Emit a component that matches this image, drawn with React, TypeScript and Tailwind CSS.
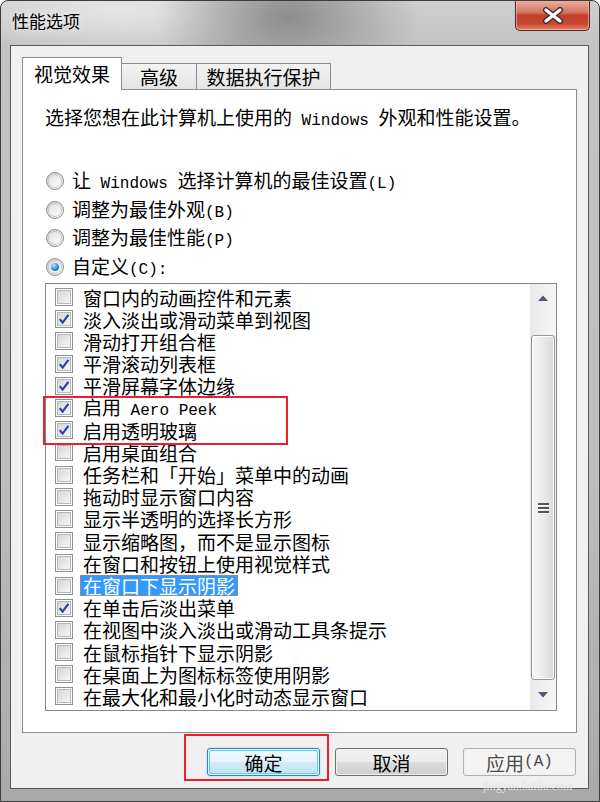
import React from "react";

const rows: [string, boolean][] = [
  ["窗口内的动画控件和元素", false],
  ["淡入淡出或滑动菜单到视图", true],
  ["滑动打开组合框", false],
  ["平滑滚动列表框", true],
  ["平滑屏幕字体边缘", true],
  ["启用 Aero Peek", true],
  ["启用透明玻璃", true],
  ["启用桌面组合", false],
  ["任务栏和「开始」菜单中的动画", false],
  ["拖动时显示窗口内容", false],
  ["显示半透明的选择长方形", false],
  ["显示缩略图，而不是显示图标", false],
  ["在窗口和按钮上使用视觉样式", false],
  ["在窗口下显示阴影", false],
  ["在单击后淡出菜单", true],
  ["在视图中淡入淡出或滑动工具条提示", false],
  ["在鼠标指针下显示阴影", false],
  ["在桌面上为图标标签使用阴影", false],
  ["在最大化和最小化时动态显示窗口", false],
];

// latin runs in the dialog font are half width, so shrink them
function Txt({ s }: { s: string }) {
  const parts = s.split(/([\x20-\x7e]+)/);
  return (
    <>
      {parts.map((p, i) =>
        /^[\x20-\x7e]+$/.test(p) ? (
          <span key={i} className="font-[family-name:'Liberation_Mono',monospace] text-[16px]">
            {p}
          </span>
        ) : (
          <React.Fragment key={i}>{p}</React.Fragment>
        )
      )}
    </>
  );
}

function Check({ on }: { on: boolean }) {
  return (
    <span className="flex w-[18px] h-[18px] shrink-0 border border-[#8e8f8f] bg-white p-px">
      <span className="flex flex-1 items-center justify-center border border-[#b5b8bc] bg-[linear-gradient(135deg,#d6d6d6,#f6f6f6)]">
        {on && (
          <svg width="12" height="12" viewBox="0 0 12 12">
            <path d="M1.8 6.2 L4.6 9.6 L10.4 1.8" fill="none" stroke="#2a3f9a" strokeWidth="2.1" />
          </svg>
        )}
      </span>
    </span>
  );
}

function Radio({ on }: { on: boolean }) {
  return (
    <span className="flex w-[18px] h-[18px] shrink-0 items-center justify-center rounded-full border border-[#8e8f8f] bg-[linear-gradient(135deg,#cfcfcf,#f8f8f8)]">
      <span className="flex w-[14px] h-[14px] items-center justify-center rounded-full border border-[#c8c8c8] bg-[linear-gradient(135deg,#e2e2e2,#fcfcfc)]">
        {on && (
          <span className="w-[8px] h-[8px] rounded-full bg-[radial-gradient(circle_at_35%_30%,#b8ecff_0%,#3aa0e6_45%,#0f4f94_100%)]" />
        )}
      </span>
    </span>
  );
}

function Btn({ label, primary, dim }: { label: string; primary?: boolean; dim?: boolean }) {
  return (
    <div
      className={
        primary
          ? "w-[113px] h-[28px] rounded-[3px] border border-[#3c7fb1] p-px shadow-[0_0_2px_#7fd0ff]"
          : dim
          ? "w-[113px] h-[28px] rounded-[3px] border border-[#adb2b5] p-px"
          : "w-[113px] h-[28px] rounded-[3px] border border-[#707070] p-px"
      }
    >
      <div
        className={
          primary
            ? "flex h-full items-center justify-center rounded-[2px] border border-[#48d6ff] bg-[linear-gradient(180deg,#f2f9fd_0%,#e6f3fa_50%,#d4ebf7_51%,#c4e3f4_100%)] text-[19px] leading-none text-black"
            : dim
            ? "flex h-full items-center justify-center rounded-[2px] bg-[#f4f4f4] text-[19px] leading-none text-[#4a4a4a]"
            : "flex h-full items-center justify-center rounded-[2px] bg-[linear-gradient(180deg,#f2f2f2_0%,#ebebeb_50%,#dddddd_51%,#cfcfcf_100%)] text-[19px] leading-none text-black"
        }
      >
        <Txt s={label} />
      </div>
    </div>
  );
}

export default function App() {
  return (
    <div className="relative flex w-[600px] h-[802px] flex-col overflow-hidden rounded-t-[8px] border border-[#3b3b3b] bg-[radial-gradient(ellipse_22%_10%_at_48%_2%,#8c8c8c_0%,rgba(140,140,140,0)_100%),radial-gradient(ellipse_30%_6%_at_20%_1%,#e6e6e6_0%,rgba(230,230,230,0)_100%),linear-gradient(180deg,#cfcfcf_0%,#c2c2c2_6%,#bdbdbd_60%,#a9a9a9_100%)] pl-[9px] pr-[10px] pb-[12px] font-[family-name:'Noto_Sans_CJK_SC',sans-serif] text-black">
      {/* title bar */}
      <div className="flex h-[44px] shrink-0 items-start justify-between">
        <div className="pl-[2px] pt-[9px] text-[17px] leading-[22px] [text-shadow:0_0_8px_#fff]">性能选项</div>
        <div className="-mt-px -mr-px flex w-[75px] h-[31px] items-center justify-center rounded-b-[5px] border border-t-0 border-[#5c2219] bg-[linear-gradient(180deg,#eab3a3_0%,#d57762_40%,#c0412a_52%,#c8472e_80%,#e0826a_100%)] shadow-[inset_0_0_0_1px_rgba(255,220,210,0.5)]">
          <svg width="22" height="17" viewBox="0 0 22 17">
            <path d="M4 3 L18 14 M18 3 L4 14" stroke="#3d2a2a" strokeWidth="6" strokeLinecap="round" />
            <path d="M4 3 L18 14 M18 3 L4 14" stroke="#ffffff" strokeWidth="3.4" strokeLinecap="round" />
          </svg>
        </div>
      </div>

      {/* client area */}
      <div className="relative flex flex-1 flex-col border border-[#5a5a5a] bg-[#f0f0f0] px-[11px] pt-[11px] pb-[11px]">
        {/* tabs */}
        <div className="relative z-10 -mb-px flex h-[33px] items-end text-[19px] leading-none">
          <div className="flex w-[100px] h-[33px] items-center justify-center border border-b-0 border-[#898c95] bg-white pb-[2px]">
            视觉效果
          </div>
          <div className="flex w-[75px] h-[27px] items-center justify-center border border-l-0 border-[#898c95] bg-[linear-gradient(180deg,#f3f3f3,#e4e4e4)]">
            高级
          </div>
          <div className="flex w-[134px] h-[27px] items-center justify-center border border-l-0 border-[#898c95] bg-[linear-gradient(180deg,#f3f3f3,#e4e4e4)]">
            数据执行保护
          </div>
        </div>

        {/* panel */}
        <div className="flex h-[644px] flex-col border border-[#898c95] bg-white pl-[22px] pr-[19px] text-[19px]">
          <div className="mt-[16px] h-[22px] leading-[22px]">
            <Txt s="选择您想在此计算机上使用的 Windows 外观和性能设置。" />
          </div>

          <div className="mt-[39px] flex flex-col">
            {[
              ["让 Windows 选择计算机的最佳设置(L)", false],
              ["调整为最佳外观(B)", false],
              ["调整为最佳性能(P)", false],
              ["自定义(C):", true],
            ].map(([t, on]) => (
              <div key={t as string} className="flex h-[28.5px] items-center gap-[8px] pl-px leading-none">
                <Radio on={on as boolean} />
                <span>
                  <Txt s={t as string} />
                </span>
              </div>
            ))}
          </div>

          {/* list */}
          <div className="mt-[2px] flex h-[428px] border border-[#828790] bg-white">
            <div className="flex flex-1 flex-col pl-[9px] pt-[2px]">
              {rows.map(([t, on], i) => (
                <div key={t} className="flex h-[22.2px] items-center gap-[7px] leading-none">
                  <Check on={on} />
                  <span
                    className={
                      i === 13
                        ? "flex h-[21px] items-center bg-[#3399ff] px-[3px] text-white outline-1 outline-dotted outline-offset-[-1px] outline-[#e08030]"
                        : "px-[3px]"
                    }
                  >
                    <Txt s={t} />
                  </span>
                </div>
              ))}
            </div>

            {/* scrollbar */}
            <div className="flex w-[26px] flex-col bg-[linear-gradient(90deg,#e9e9e9,#f6f6f6)]">
              <div className="flex h-[27px] items-center justify-center">
                <svg width="10" height="6" viewBox="0 0 10 6">
                  <path d="M0 6 L5 0.5 L10 6 Z" fill="#4a5a78" />
                </svg>
              </div>
              <div className="h-[24px]" />
              <div className="mx-[1px] flex h-[345px] items-center justify-center rounded-[3px] border border-[#979797] bg-[linear-gradient(90deg,#f7f7f7_0%,#ececec_45%,#d9d9d9_100%)] shadow-[inset_0_0_0_1px_#fff]">
                <div className="flex w-[11px] flex-col gap-[2px]">
                  <div className="h-[2px] bg-[#555] shadow-[0_1px_0_#fff]" />
                  <div className="h-[2px] bg-[#555] shadow-[0_1px_0_#fff]" />
                  <div className="h-[2px] bg-[#555] shadow-[0_1px_0_#fff]" />
                </div>
              </div>
              <div className="flex flex-1 items-center justify-center">
                <svg width="10" height="6" viewBox="0 0 10 6">
                  <path d="M0 0 L5 5.5 L10 0 Z" fill="#4a5a78" />
                </svg>
              </div>
            </div>
          </div>
        </div>

        {/* buttons */}
        <div className="mt-[15px] flex justify-end gap-[15px] pr-px">
          <Btn label="确定" primary />
          <Btn label="取消" />
          <Btn label="应用(A)" dim />
        </div>
      </div>

      {/* annotation boxes */}
      <div className="absolute left-[42px] top-[395px] w-[245px] h-[49px] border-2 border-[#e8212a]" />
      <div className="absolute left-[183px] top-[733px] w-[145px] h-[47px] border-2 border-[#e8212a]" />

      {/* watermark */}
      <div className="pointer-events-none absolute left-[482px] top-[779px] font-[family-name:'Liberation_Serif',serif] text-[12px] leading-none text-white opacity-70 [text-shadow:0_0_1px_#999]">
        jingyan.baidu.com
      </div>
    </div>
  );
}
